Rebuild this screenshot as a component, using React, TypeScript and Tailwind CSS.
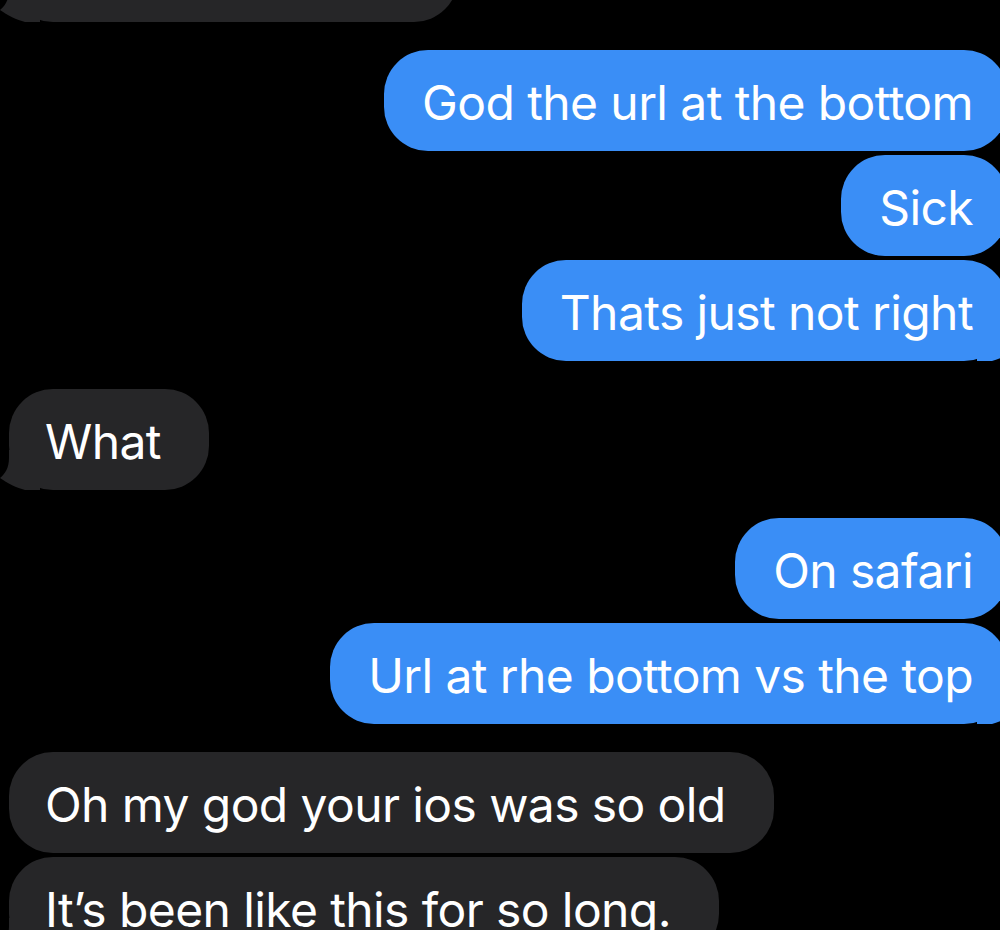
const blue = 'bg-[#3a8ef6]';
const gray = 'bg-[#262628]';

type Msg = { text: string; me: boolean; tail?: boolean; gap: 'tight' | 'group' };

const messages: Msg[] = [
  { text: 'God the url at the bottom', me: true, gap: 'group' },
  { text: 'Sick', me: true, gap: 'tight' },
  { text: 'Thats just not right', me: true, tail: true, gap: 'tight' },
  { text: 'What', me: false, tail: true, gap: 'group' },
  { text: 'On safari', me: true, gap: 'group' },
  { text: 'Url at rhe bottom vs the top', me: true, tail: true, gap: 'tight' },
  { text: 'Oh my god your ios was so old', me: false, gap: 'group' },
  { text: 'It\u2019s been like this for so long.', me: false, tail: true, gap: 'tight' },
];

function LeftTail() {
  return (
    <svg className="absolute bottom-0 left-[-9px] h-[40px] w-[40px]" viewBox="0 0 40 40">
      <path d="M9 0 L40 0 L40 40 L25 40 C17 38 7 33 0 28 C5 24 9 18 9 8 Z" fill="#262628" />
    </svg>
  );
}

function RightTail() {
  return (
    <svg className="absolute bottom-0 right-[-9px] h-[40px] w-[40px]" viewBox="0 0 40 40">
      <path d="M31 0 L0 0 L0 40 L15 40 C23 38 33 33 40 28 C35 24 31 18 31 8 Z" fill="#3a8ef6" />
    </svg>
  );
}

function Bubble({ msg }: { msg: Msg }) {
  const spacing = msg.gap === 'tight' ? 'mt-[4px]' : 'mt-[28px]';
  if (msg.me) {
    return (
      <div className={`flex justify-end ${spacing}`}>
        <div
          className={`relative mr-[-8px] flex h-[101px] items-center rounded-[44px] pl-[38px] pr-[35px] text-white ${blue}`}
        >
          {msg.tail && <RightTail />}
          <span className="relative whitespace-nowrap pt-[4px]">{msg.text}</span>
        </div>
      </div>
    );
  }
  return (
    <div className={`flex justify-start ${spacing}`}>
      <div
        className={`relative ml-[9px] flex h-[101px] items-center rounded-[44px] pl-[36px] pr-[48px] text-white ${gray}`}
      >
        {msg.tail && <LeftTail />}
        <span className="relative whitespace-nowrap pt-[4px]">{msg.text}</span>
      </div>
    </div>
  );
}

export default function App() {
  return (
    <div
      className="h-[930px] w-[1000px] overflow-hidden bg-black text-[48px] tracking-[-0.6px]"
      style={{ fontFamily: 'Inter, "Noto Sans", sans-serif' }}
    >
      <div className="flex flex-col">
        {/* previous message, mostly scrolled off */}
        <div className="mt-[-79px] flex justify-start">
          <div className={`relative ml-[9px] h-[101px] w-[449px] rounded-[44px] ${gray}`}>
            <LeftTail />
          </div>
        </div>
        {messages.map((m, i) => (
          <Bubble key={i} msg={m} />
        ))}
      </div>
    </div>
  );
}
